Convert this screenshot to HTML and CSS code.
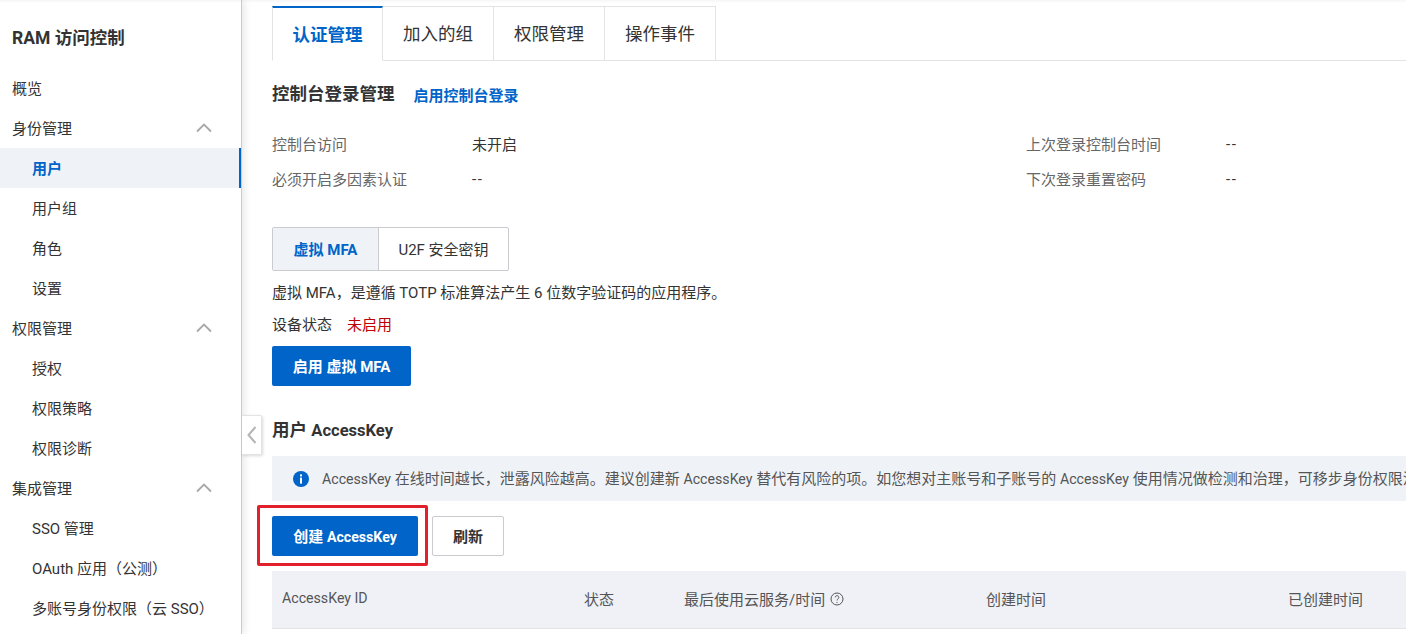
FILE: index.html
```html
<!DOCTYPE html>
<html lang="zh-CN">
<head>
<meta charset="utf-8">
<title>RAM 访问控制</title>
<link rel="stylesheet" href="styles.css">
</head>
<body>
<div class="app">
  <aside class="sidebar">
    <h1 class="brand">RAM 访问控制</h1>
    <nav class="nav">
      <a class="nav-item">概览</a>
      <a class="nav-item">身份管理<svg class="chev" viewBox="0 0 16 10"><path d="M1 8.5 8 1.5l7 7"/></svg></a>
      <a class="nav-item sub active">用户</a>
      <a class="nav-item sub">用户组</a>
      <a class="nav-item sub">角色</a>
      <a class="nav-item sub">设置</a>
      <a class="nav-item">权限管理<svg class="chev" viewBox="0 0 16 10"><path d="M1 8.5 8 1.5l7 7"/></svg></a>
      <a class="nav-item sub">授权</a>
      <a class="nav-item sub">权限策略</a>
      <a class="nav-item sub">权限诊断</a>
      <a class="nav-item">集成管理<svg class="chev" viewBox="0 0 16 10"><path d="M1 8.5 8 1.5l7 7"/></svg></a>
      <a class="nav-item sub">SSO 管理</a>
      <a class="nav-item sub">OAuth 应用（公测）</a>
      <a class="nav-item sub">多账号身份权限（云 SSO）</a>
    </nav>
  </aside>
  <button class="collapse" aria-label="收起"><svg viewBox="0 0 10 18"><path d="M8.5 1 1.5 9l7 8"/></svg></button>
  <main class="main">
    <div class="tabs">
      <div class="tab active">认证管理</div>
      <div class="tab">加入的组</div>
      <div class="tab">权限管理</div>
      <div class="tab">操作事件</div>
    </div>
    <div class="heading-row">
      <h2 class="heading">控制台登录管理</h2>
      <a class="link">启用控制台登录</a>
    </div>
    <dl class="info">
      <dt>控制台访问</dt><dd>未开启</dd><dt>上次登录控制台时间</dt><dd class="dash">--</dd>
      <dt>必须开启多因素认证</dt><dd class="dash">--</dd><dt>下次登录重置密码</dt><dd class="dash">--</dd>
    </dl>
    <div class="segment">
      <div class="seg seg-on">虚拟 MFA</div>
      <div class="seg">U2F 安全密钥</div>
    </div>
    <p class="desc">虚拟 MFA，是遵循 TOTP 标准算法产生 6 位数字验证码的应用程序。</p>
    <p class="status">设备状态<span class="off">未启用</span></p>
    <button class="btn primary mfa">启用 虚拟 MFA</button>
    <h2 class="heading ak-title">用户 <span class="en">AccessKey</span></h2>
    <div class="alert">
      <svg class="info-icon" viewBox="0 0 16 16"><circle cx="8" cy="8" r="8"/><rect x="7" y="3.4" width="2" height="2"/><rect x="7" y="6.6" width="2" height="6"/></svg>
      <span class="alert-text"><span class="en">AccessKey</span> 在线时间越长，泄露风险越高。建议创建新 <span class="en">AccessKey</span> 替代有风险的项。如您想对主账号和子账号的 <span class="en">AccessKey</span> 使用情况做检测和治理，可移步身份权限治理</span>
    </div>
    <div class="actions">
      <button class="btn primary create">创建 <span class="en">AccessKey</span></button>
      <button class="btn plain">刷新</button>
      <span class="mark"></span>
    </div>
    <div class="thead">
      <span class="en">AccessKey ID</span>
      <span>状态</span>
      <span class="th-help">最后使用云服务/时间<svg class="help" viewBox="0 0 14 14"><circle cx="7" cy="7" r="6"/><path d="M5.2 5.4a1.8 1.8 0 1 1 2.7 1.6c-.6.4-.9.7-.9 1.5"/><path d="M7 10v1"/></svg></span>
      <span>创建时间</span>
      <span>已创建时间</span>
    </div>
  </main>
</div>
</body>
</html>
```
FILE: styles.css
```css
* { box-sizing: border-box; }
html, body { margin: 0; height: 100%; overflow: hidden; background: #fff; }
body {
  font-family: Roboto, "Noto Sans CJK SC", sans-serif;
  font-size: 15px;
  color: #333;
}
.en { font-size: .945em; line-height: 1; }
.app { display: flex; width: 1406px; height: 634px; position: relative; overflow: hidden; }
.app::before {
  content: ""; position: absolute; left: 0; right: 0; top: 0; height: 3px; z-index: 2;
  background: linear-gradient(rgba(0,0,0,.04), rgba(0,0,0,0));
}
.sidebar {
  flex: 0 0 242px;
  min-width: 0;
  height: 634px;
  border-right: 1px solid #c9cbce;
  box-shadow: 2px 0 8px rgba(0,0,0,.1);
  padding-top: 18px;
  background: #fff;
}
.brand { margin: 0 0 10px; padding-left: 12px; font-size: 17.5px; line-height: 40px; font-weight: 700; color: #333; }
.nav { display: flex; flex-direction: column; }
.nav-item {
  display: flex; align-items: center; justify-content: space-between;
  height: 40px; padding: 0 29px 2px 12px; color: #333; font-size: 15px; white-space: nowrap;
}
.nav-item.sub { padding-left: 32px; }
.nav-item.active { background: #eff3f8; color: #0064c8; font-weight: 700; border-right: 2px solid #0064c8; }
.chev { width: 16px; height: 10px; margin-top: 2px; fill: none; stroke: #a8a8a8; stroke-width: 1.8; }
.collapse {
  position: absolute; left: 242px; top: 415px; width: 20px; height: 40px; padding: 0;
  border: 1px solid #e3e3e3; border-left: 0; border-radius: 0 2px 2px 0; background: #fff;
  box-shadow: 1px 1px 3px rgba(0,0,0,.15); display: flex; align-items: center; justify-content: center;
}
.collapse svg { width: 10px; height: 18px; fill: none; stroke: #b4b4b4; stroke-width: 2; }
.main { flex: 1; min-width: 0; padding: 6px 0 0 30px; display: flex; flex-direction: column; align-items: flex-start; }
.tabs { display: flex; align-self: stretch; height: 55px; border-bottom: 1px solid #e3e3e3; }
.tab {
  width: 111px; height: 55px; padding-bottom: 2px; display: flex; align-items: center; justify-content: center;
  border: 1px solid #e3e3e3; border-left: 0; font-size: 17.5px; color: #333;
}
.tab.active {
  border-top: 2px solid #0064c8; border-left: 1px solid #e3e3e3; border-bottom: 1px solid #fff;
  color: #0064c8; font-weight: 700;
}
.heading-row { display: flex; align-items: center; gap: 19px; height: 28px; margin-top: 19px; }
.heading { margin: 0; font-size: 17.5px; font-weight: 700; color: #333; line-height: 28px; }
.link { color: #0064c8; font-size: 15px; font-weight: 700; }
.info { display: grid; grid-template-columns: 200px 554px 200px 1fr; grid-auto-rows: 35px; align-self: stretch; margin: 18px 0 0; align-items: center; }
.info dt { color: #666; }
.info dd { margin: 0; color: #333; }
.info .dash { letter-spacing: 1.5px; }
.segment { display: flex; margin-top: 31px; height: 44px; border: 1px solid #c9cbce; border-radius: 2px; }
.seg { display: flex; align-items: center; justify-content: center; width: 129px; padding-bottom: 2px; font-size: 15px; color: #333; }
.seg-on { width: 106px; background: #eff3f8; color: #0064c8; font-weight: 700; border-right: 1px solid #c9cbce; }
.desc { margin: 11px 0 0; line-height: 22px; color: #333; }
.status { margin: 10px 0 0; line-height: 22px; color: #333; }
.off { color: #c00000; margin-left: 15px; }
.btn { font: inherit; height: 40px; border-radius: 2px; font-weight: 700; padding: 0 0 2px; }
.primary { background: #0064c8; border: 0; color: #fff; }
.mfa { width: 139px; margin-top: 10px; }
.ak-title { margin-top: 30px; }
.alert {
  display: flex; align-items: center; align-self: stretch; height: 45px; margin-top: 12px;
  background: #eff3f8; padding-left: 21px; white-space: nowrap; overflow: hidden; color: #555;
}
.alert-text { margin-bottom: 2px; }
.info-icon { flex: none; width: 16px; height: 16px; margin-right: 13px; fill: #0064c8; }
.info-icon rect { fill: #fff; }
.actions { display: flex; gap: 14px; margin-top: 15px; position: relative; }
.create { width: 146px; }
.plain { width: 72px; background: #fff; border: 1px solid #c9cbce; color: #333; }
.mark {
  position: absolute; left: -15px; top: -11px; width: 171px; height: 61px;
  border: 3px solid #e1202c; border-radius: 2px; pointer-events: none;
}
.thead {
  display: grid; grid-template-columns: 302px 100px 302px 302px 1fr; align-items: center;
  align-self: stretch; height: 58px; margin-top: 15px; padding: 0 0 2px 10px;
  background: #eff1f7; border-bottom: 1px solid #e3e3e3; color: #555;
}
.th-help { display: flex; align-items: center; gap: 5px; }
.help { width: 14px; height: 14px; fill: none; stroke: #555; stroke-width: 1; }
```
